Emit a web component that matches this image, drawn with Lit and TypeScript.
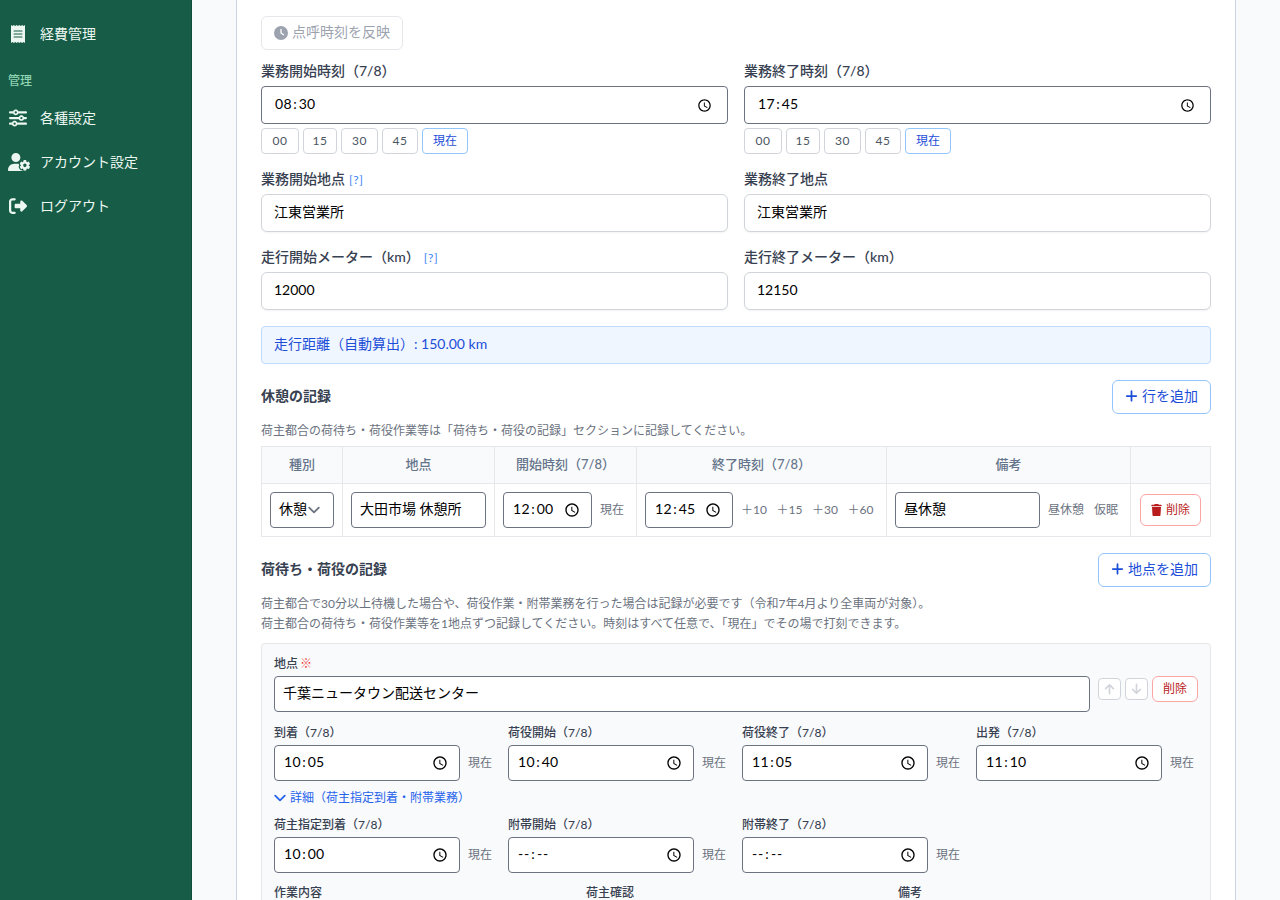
import { LitElement, html, css, svg, nothing } from "lit";
import { customElement, property } from "lit/decorators.js";

type Icon = { box: string; d: string };

const ICONS: Record<string, Icon> = {
  receipt: {
    box: "0 0 14 18",
    d: "M0 0 1.4 1.1 2.8 0 4.2 1.1 5.6 0 7 1.1 8.4 0 9.8 1.1 11.2 0 12.6 1.1 14 0V18L12.6 16.9 11.2 18 9.8 16.9 8.4 18 7 16.9 5.6 18 4.2 16.9 2.8 18 1.4 16.9 0 18ZM3 5.4a.5.5 0 0 0 0 1h8a.5.5 0 0 0 0-1ZM3 8.5a.5.5 0 0 0 0 1h8a.5.5 0 0 0 0-1ZM3 11.6a.5.5 0 0 0 0 1h8a.5.5 0 0 0 0-1Z",
  },
  sliders: {
    box: "0 0 512 512",
    d: "M0 416c0 17.7 14.3 32 32 32l54.7 0c12.3 28.3 40.5 48 73.3 48s61-19.7 73.3-48L480 448c17.7 0 32-14.3 32-32s-14.3-32-32-32l-246.7 0c-12.3-28.3-40.5-48-73.3-48s-61 19.7-73.3 48L32 384c-17.7 0-32 14.3-32 32zm128 0a32 32 0 1 1 64 0 32 32 0 1 1 -64 0zM320 256a32 32 0 1 1 64 0 32 32 0 1 1 -64 0zm32-80c-32.8 0-61 19.7-73.3 48L32 224c-17.7 0-32 14.3-32 32s14.3 32 32 32l246.7 0c12.3 28.3 40.5 48 73.3 48s61-19.7 73.3-48l54.7 0c17.7 0 32-14.3 32-32s-14.3-32-32-32l-54.7 0c-12.3-28.3-40.5-48-73.3-48zM192 128a32 32 0 1 1 0-64 32 32 0 1 1 0 64zm73.3-64C253 35.7 224.8 16 192 16s-61 19.7-73.3 48L32 64C14.3 64 0 78.3 0 96s14.3 32 32 32l86.7 0c12.3 28.3 40.5 48 73.3 48s61-19.7 73.3-48L480 128c17.7 0 32-14.3 32-32s-14.3-32-32-32L265.3 64z",
  },
  userGear: {
    box: "0 0 640 512",
    d: "M224 0a128 128 0 1 1 0 256A128 128 0 1 1 224 0zM178.3 304h91.4c11.8 0 23.4 1.2 34.5 3.3c-2.1 18.5 7.4 35.6 21.8 44.8c-16.6 10.6-26.7 31.6-20 53.3c4 12.9 9.4 25.5 16.4 37.6s15.2 23.1 24.4 33c15.7 16.9 39.6 18.4 57.2 8.7v.9c0 9.2 2.7 18.5 7.9 26.3H29.7C13.3 512 0 498.7 0 482.3C0 383.8 79.8 304 178.3 304zM436 218.2c0-7 4.5-13.3 11.3-14.8c10.5-2.4 21.5-3.7 32.7-3.7s22.2 1.3 32.7 3.7c6.8 1.5 11.3 7.8 11.3 14.8v30.6c7.9 3.4 15.4 7.7 22.3 12.8l24.9-14.3c6.1-3.5 13.7-2.7 18.5 2.4c7.6 8.1 14.3 17.2 20.1 27.2s10.3 20.4 13.5 31c2.1 6.7-1.1 13.7-7.2 17.2l-25 14.4c.4 4 .7 8.1 .7 12.3s-.2 8.2-.7 12.3l25 14.4c6.1 3.5 9.2 10.5 7.2 17.2c-3.3 10.6-7.8 21-13.5 31s-12.5 19.1-20.1 27.2c-4.8 5.1-12.5 5.9-18.5 2.4l-24.9-14.3c-6.9 5.1-14.3 9.4-22.3 12.8l0 30.6c0 7-4.5 13.3-11.3 14.8c-10.5 2.4-21.5 3.7-32.7 3.7s-22.2-1.3-32.7-3.7c-6.8-1.5-11.3-7.8-11.3-14.8V454.8c-8-3.4-15.6-7.7-22.5-12.9l-24.7 14.3c-6.1 3.5-13.7 2.7-18.5-2.4c-7.6-8.1-14.3-17.2-20.1-27.2s-10.3-20.4-13.5-31c-2.1-6.7 1.1-13.7 7.2-17.2l24.8-14.3c-.4-4.1-.7-8.2-.7-12.4s.2-8.3 .7-12.4L343.8 325c-6.1-3.5-9.2-10.5-7.2-17.2c3.3-10.6 7.7-21 13.5-31s12.5-19.1 20.1-27.2c4.8-5.1 12.4-5.9 18.5-2.4l24.8 14.3c6.9-5.1 14.5-9.4 22.5-12.9V218.2zm92.1 133.5a48.1 48.1 0 1 0 -96.1 0 48.1 48.1 0 1 0 96.1 0z",
  },
  logout: {
    box: "0 0 512 512",
    d: "M377.9 105.9L500.7 228.7c7.2 7.2 11.3 17.1 11.3 27.3s-4.1 20.1-11.3 27.3L377.9 406.1c-6.4 6.4-15 9.9-24 9.9c-18.7 0-33.9-15.2-33.9-33.9l0-62.1-128 0c-17.7 0-32-14.3-32-32l0-64c0-17.7 14.3-32 32-32l128 0 0-62.1c0-18.7 15.2-33.9 33.9-33.9c9 0 17.6 3.6 24 9.9zM160 96L96 96c-17.7 0-32 14.3-32 32l0 256c0 17.7 14.3 32 32 32l64 0c17.7 0 32 14.3 32 32s-14.3 32-32 32l-64 0c-53 0-96-43-96-96L0 128C0 75 43 32 96 32l64 0c17.7 0 32 14.3 32 32s-14.3 32-32 32z",
  },
  clock: {
    box: "0 0 512 512",
    d: "M256 0a256 256 0 1 1 0 512A256 256 0 1 1 256 0zM232 120l0 136c0 8 4 15.5 10.7 20l96 64c11 7.4 25.9 4.4 33.3-6.7s4.4-25.9-6.7-33.3L280 243.2 280 120c0-13.3-10.7-24-24-24s-24 10.7-24 24z",
  },
  plus: {
    box: "0 0 448 512",
    d: "M256 80c0-17.7-14.3-32-32-32s-32 14.3-32 32l0 144L48 224c-17.7 0-32 14.3-32 32s14.3 32 32 32l144 0 0 144c0 17.7 14.3 32 32 32s32-14.3 32-32l0-144 144 0c17.7 0 32-14.3 32-32s-14.3-32-32-32l-144 0 0-144z",
  },
  trash: {
    box: "0 0 448 512",
    d: "M135.2 17.7L128 32 32 32C14.3 32 0 46.3 0 64S14.3 96 32 96l384 0c17.7 0 32-14.3 32-32s-14.3-32-32-32l-96 0-7.2-14.3C307.4 6.8 296.3 0 284.2 0L163.8 0c-12.1 0-23.2 6.8-28.6 17.7zM416 128L32 128 53.2 467c1.6 25.3 22.6 45 47.9 45l245.8 0c25.3 0 46.3-19.7 47.9-45L416 128z",
  },
  picker: {
    box: "0 0 24 24",
    d: "M11.99 2C6.47 2 2 6.48 2 12s4.47 10 9.99 10C17.52 22 22 17.52 22 12S17.52 2 11.99 2zM12 20c-4.42 0-8-3.58-8-8s3.58-8 8-8 8 3.58 8 8-3.58 8-8 8zM12.5 7H11v6l5.25 3.15.75-1.23-4.5-2.67z",
  },
};

const STROKES: Record<string, Icon> = {
  chevron: { box: "0 0 12 12", d: "M1.2 3.6 6 8.4l4.8-4.8" },
  up: { box: "0 0 12 12", d: "M6 11.2V1.4M1.8 5.6 6 1.4l4.2 4.2" },
  down: { box: "0 0 12 12", d: "M6 .8v9.8M1.8 6.4 6 10.6l4.2-4.2" },
};

const icon = (name: string, cls = "") => {
  const i = ICONS[name];
  return html`<svg class="icon ${cls}" viewBox=${i.box} fill="currentColor" fill-rule="evenodd">${svg`<path d=${i.d}></path>`}</svg>`;
};

const stroke = (name: string, cls = "") => {
  const i = STROKES[name];
  return html`<svg class="icon ${cls}" viewBox=${i.box} fill="none" stroke="currentColor" stroke-width="1.8" stroke-linecap="round" stroke-linejoin="round">${svg`<path d=${i.d}></path>`}</svg>`;
};

const base = css`
  * {
    box-sizing: border-box;
  }
  .icon {
    display: block;
    flex: none;
  }
`;

@customElement("time-field")
class TimeField extends LitElement {
  @property() value = "";
  @property() size = "lg";

  static styles = [
    base,
    css`
      :host {
        display: block;
        min-width: 0;
      }
      .box {
        display: flex;
        align-items: center;
        justify-content: space-between;
        background: #fff;
        border: 1px solid #6b7280;
        border-radius: 4px;
        color: #000;
        font-size: 14px;
        line-height: 20px;
      }
      .lg {
        height: 38px;
        padding: 0 15px 0 13px;
      }
      .md {
        height: 36px;
        padding: 0 11px 0 9px;
      }
      .value {
        display: flex;
        letter-spacing: 0.3px;
        padding-bottom: 2px;
      }
      .sep {
        padding: 0 1.5px;
      }
      .empty {
        letter-spacing: 0.7px;
      }
      .picker {
        width: 15px;
        height: 15px;
      }
      .md .picker {
        width: 16px;
        height: 16px;
      }
    `,
  ];

  render() {
    const [h, m] = this.value.split(":");
    return html`<div class="box ${this.size}">
      <div class="value ${h === "--" ? "empty" : ""}"><span>${h}</span><span class="sep">:</span><span>${m}</span></div>
      ${icon("picker", "picker")}
    </div>`;
  }
}

@customElement("app-root")
class AppRoot extends LitElement {
  static styles = [
    base,
    css`
      :host {
        display: flex;
        height: 900px;
        overflow: hidden;
        background: #f8fafc;
        font-family: Lato, "Noto Sans CJK JP", sans-serif;
        font-size: 14px;
        line-height: 20px;
        color: #374151;
      }
      .sidebar {
        width: 192px;
        flex: none;
        background: #165c46;
        border-right: 1px solid #134e3c;
        padding-top: 12px;
        color: #ecf7f1;
      }
      .nav {
        display: flex;
        align-items: center;
        height: 44px;
        padding-left: 8px;
      }
      .nav-icon {
        width: 20px;
        margin-right: 12px;
        display: flex;
        justify-content: center;
      }
      .nav-icon .icon {
        height: 18px;
      }
      .nav-icon.wide {
        width: 22px;
        margin-right: 10px;
      }
      .nav-title {
        font-size: 12px;
        line-height: 16px;
        font-weight: 500;
        color: #8fd3b3;
        padding: 17px 0 7px 8px;
      }
      .main {
        flex: 1;
        min-width: 0;
        padding: 0 44px;
      }
      .card {
        height: 930px;
        background: #fff;
        border: solid #cbd5e1;
        border-width: 0 1px;
        padding: 16px 24px 0;
      }
      .btn {
        display: inline-flex;
        align-items: center;
        gap: 4px;
        height: 34px;
        padding: 0 12px;
        border: 1px solid #93c5fd;
        border-radius: 6px;
        background: #fff;
        color: #1d4ed8;
      }
      .btn span {
        padding-bottom: 3px;
      }
      .btn .plus {
        margin-bottom: 2px;
      }
      .btn.off {
        border-color: #e5e7eb;
        color: #9ca3af;
      }
      .i14 {
        width: 14px;
        height: 14px;
      }
      .plus {
        width: 13px;
        height: 14px;
      }
      .pair {
        display: grid;
        grid-template-columns: 1fr 1fr;
        column-gap: 16px;
        row-gap: 15px;
        margin-top: 11px;
      }
      .label {
        display: flex;
        height: 20px;
        font-weight: 500;
        margin-bottom: 5px;
      }
      .help {
        font-size: 12px;
        font-weight: 400;
        letter-spacing: 0.6px;
        color: #3b82f6;
        margin-left: 4px;
        padding-top: 1px;
      }
      .input {
        display: flex;
        align-items: center;
        height: 38px;
        padding: 0 12px 2px;
        border: 1px solid #d1d5db;
        border-radius: 6px;
        background: #fff;
        color: #000;
        box-shadow: 0 1px 2px rgba(0, 0, 0, 0.05);
      }
      .input.dark {
        height: 36px;
        padding: 0 8px 2px;
        border-color: #6b7280;
        border-radius: 4px;
        box-shadow: none;
      }
      .chips {
        display: flex;
        gap: 4px;
        margin-top: 4px;
      }
      .chip {
        height: 26px;
        border: 1px solid #d1d5db;
        border-radius: 4px;
        background: #fff;
        color: #4b5563;
        font-size: 12px;
        letter-spacing: 0.5px;
        line-height: 23px;
        text-align: center;
      }
      .w38 {
        width: 38px;
      }
      .w34 {
        width: 34px;
      }
      .w37 {
        width: 37px;
      }
      .w36 {
        width: 36px;
      }
      .now {
        width: 46px;
        letter-spacing: 0;
        border-color: #93c5fd;
        color: #1d4ed8;
      }
      .distance {
        height: 38px;
        margin-top: 16px;
        padding: 7px 12px;
        border: 1px solid #bfdbfe;
        border-radius: 4px;
        background: #eff6ff;
        color: #1d4ed8;
      }
      .head {
        display: flex;
        align-items: center;
        justify-content: space-between;
        margin-top: 16px;
      }
      .title {
        font-weight: 700;
        padding-bottom: 2px;
      }
      .note {
        font-size: 12px;
        line-height: 20px;
        color: #6b7280;
        margin-top: 7px;
      }
      .table {
        display: grid;
        grid-template-columns: 81px 152px 142px 250px 244px 80px;
        margin-top: 5px;
        border-right: 1px solid #e5e7eb;
      }
      .cell {
        display: flex;
        align-items: center;
        height: 53px;
        padding: 0 8px;
        border-left: 1px solid #e5e7eb;
        border-bottom: 1px solid #e5e7eb;
        min-width: 0;
      }
      .th {
        height: 38px;
        justify-content: center;
        border-top: 1px solid #e5e7eb;
        background: #f9fafb;
        color: #64748b;
        font-size: 13px;
        font-weight: 500;
        padding-bottom: 2px;
      }
      .link {
        font-size: 12px;
        line-height: 16px;
        color: #6b7280;
        margin-left: 8px;
        white-space: nowrap;
      }
      .plus-links {
        display: flex;
        gap: 9.6px;
        margin-left: 8px;
      }
      .plus-links .link {
        margin: 0;
      }
      .remarks .link + .link {
        margin-left: 10px;
      }
      .select {
        width: 64px;
        gap: 1px;
      }
      .select .icon {
        width: 12px;
        height: 12px;
        color: #6b7280;
        margin-top: 2px;
      }
      .place {
        width: 135px;
      }
      .t1 {
        width: 89px;
      }
      .t2 {
        width: 88px;
      }
      .remark {
        width: 145px;
      }
      .del {
        display: flex;
        align-items: center;
        gap: 4px;
        height: 32px;
        width: 61px;
        flex: none;
        margin-left: 1px;
        padding: 0 10px 1px;
        border: 1px solid #fca5a5;
        border-radius: 6px;
        background: #fff;
        color: #b91c1c;
        font-size: 12px;
        white-space: nowrap;
      }
      .del .icon {
        width: 11px;
        height: 12px;
      }
      .del.small {
        width: 46px;
        height: 26px;
        margin-left: 0;
      }
      .panel {
        margin-top: 9px;
        padding: 12px 12px 0;
        height: 300px;
        border: 1px solid #e5e7eb;
        border-radius: 4px;
        background: #f9fafb;
      }
      .small-label {
        font-size: 12px;
        line-height: 16px;
        font-weight: 500;
        margin-bottom: 4px;
        white-space: nowrap;
      }
      .req {
        color: #ef4444;
        font-weight: 400;
        margin-left: 2px;
      }
      .place-row {
        display: flex;
        align-items: flex-start;
        gap: 8px;
      }
      .place-row .input {
        flex: 1;
      }
      .actions {
        display: flex;
        align-items: center;
        gap: 4px;
      }
      .move {
        width: 23px;
        height: 22px;
        display: flex;
        align-items: center;
        justify-content: center;
        border: 1px solid #d1d5db;
        border-radius: 4px;
        background: #fff;
        color: #d1d5db;
      }
      .move .icon {
        width: 11px;
        height: 12px;
      }
      .times {
        display: grid;
        grid-template-columns: repeat(4, 222px);
        column-gap: 12px;
        margin-top: 13px;
      }
      .times.second {
        margin-top: 11px;
      }
      .time-row {
        display: flex;
        align-items: center;
      }
      .time-row time-field {
        width: 186px;
      }
      .detail {
        display: flex;
        align-items: center;
        gap: 4px;
        margin-top: 9px;
        font-size: 12px;
        line-height: 16px;
        color: #2563eb;
      }
      .detail .icon {
        width: 12px;
        height: 12px;
      }
      .three {
        display: grid;
        grid-template-columns: repeat(3, 1fr);
        column-gap: 12px;
        margin-top: 12px;
      }
    `,
  ];

  private nav(name: string, text: string, wide = false) {
    return html`<div class="nav"><span class="nav-icon ${wide ? "wide" : ""}">${icon(name)}</span><span>${text}</span></div>`;
  }

  private shift(label: string, value: string) {
    return html`<div>
      <div class="label">${label}</div>
      <time-field value=${value}></time-field>
      <div class="chips">
        <span class="chip w38">00</span><span class="chip w34">15</span><span class="chip w37">30</span
        ><span class="chip w36">45</span><span class="chip now">現在</span>
      </div>
    </div>`;
  }

  private text(label: string, value: string, help = false) {
    return html`<div>
      <div class="label">${label}${help ? html`<span class="help">[?]</span>` : nothing}</div>
      <div class="input">${value}</div>
    </div>`;
  }

  private stop(label: string, value: string) {
    return html`<div>
      <div class="small-label">${label}（7/8）</div>
      <div class="time-row"><time-field size="md" value=${value}></time-field><span class="link">現在</span></div>
    </div>`;
  }

  render() {
    return html`
      <nav class="sidebar">
        ${this.nav("receipt", "経費管理")}
        <div class="nav-title">管理</div>
        ${this.nav("sliders", "各種設定")} ${this.nav("userGear", "アカウント設定", true)}
        ${this.nav("logout", "ログアウト")}
      </nav>
      <main class="main">
        <div class="card">
          <div class="btn off">${icon("clock", "i14")}<span>点呼時刻を反映</span></div>
          <div class="pair">
            ${this.shift("業務開始時刻（7/8）", "08:30")} ${this.shift("業務終了時刻（7/8）", "17:45")}
            ${this.text("業務開始地点", "江東営業所", true)} ${this.text("業務終了地点", "江東営業所")}
            ${this.text("走行開始メーター（km）", "12000", true)} ${this.text("走行終了メーター（km）", "12150")}
          </div>
          <div class="distance">走行距離（自動算出）: 150.00 km</div>

          <div class="head">
            <div class="title">休憩の記録</div>
            <div class="btn">${icon("plus", "plus")}<span>行を追加</span></div>
          </div>
          <div class="note">荷主都合の荷待ち・荷役作業等は「荷待ち・荷役の記録」セクションに記録してください。</div>
          <div class="table">
            ${["種別", "地点", "開始時刻（7/8）", "終了時刻（7/8）", "備考", ""].map(
              (t) => html`<div class="cell th">${t}</div>`,
            )}
            <div class="cell"><div class="input dark select">休憩${stroke("chevron")}</div></div>
            <div class="cell"><div class="input dark place">大田市場 休憩所</div></div>
            <div class="cell">
              <time-field class="t1" size="md" value="12:00"></time-field><span class="link">現在</span>
            </div>
            <div class="cell">
              <time-field class="t2" size="md" value="12:45"></time-field>
              <div class="plus-links">
                ${["10", "15", "30", "60"].map((n) => html`<span class="link">＋${n}</span>`)}
              </div>
            </div>
            <div class="cell remarks">
              <div class="input dark remark">昼休憩</div>
              <span class="link">昼休憩</span><span class="link">仮眠</span>
            </div>
            <div class="cell"><div class="del">${icon("trash")}削除</div></div>
          </div>

          <div class="head">
            <div class="title">荷待ち・荷役の記録</div>
            <div class="btn">${icon("plus", "plus")}<span>地点を追加</span></div>
          </div>
          <div class="note">
            荷主都合で30分以上待機した場合や、荷役作業・附帯業務を行った場合は記録が必要です（令和7年4月より全車両が対象）。<br />荷主都合の荷待ち・荷役作業等を1地点ずつ記録してください。時刻はすべて任意で、「現在」でその場で打刻できます。
          </div>

          <div class="panel">
            <div class="small-label">地点<span class="req">※</span></div>
            <div class="place-row">
              <div class="input dark">千葉ニュータウン配送センター</div>
              <div class="actions">
                <span class="move">${stroke("up")}</span><span class="move">${stroke("down")}</span>
                <div class="del small">削除</div>
              </div>
            </div>
            <div class="times">
              ${this.stop("到着", "10:05")} ${this.stop("荷役開始", "10:40")} ${this.stop("荷役終了", "11:05")}
              ${this.stop("出発", "11:10")}
            </div>
            <div class="detail">${stroke("chevron")}詳細（荷主指定到着・附帯業務）</div>
            <div class="times second">
              ${this.stop("荷主指定到着", "10:00")} ${this.stop("附帯開始", "--:--")} ${this.stop("附帯終了", "--:--")}
            </div>
            <div class="three">
              <div class="small-label">作業内容</div>
              <div class="small-label">荷主確認</div>
              <div class="small-label">備考</div>
            </div>
          </div>
        </div>
      </main>
    `;
  }
}
